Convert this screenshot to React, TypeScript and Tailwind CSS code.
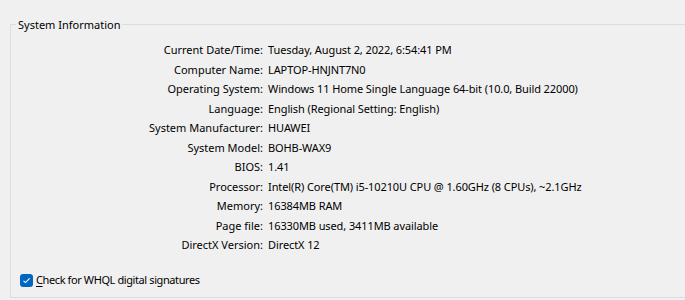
import React from "react";

const rows: [string, string][] = [
  ["Current Date/Time:", "Tuesday, August 2, 2022, 6:54:41 PM"],
  ["Computer Name:", "LAPTOP-HNJNT7N0"],
  ["Operating System:", "Windows 11 Home Single Language 64-bit (10.0, Build 22000)"],
  ["Language:", "English (Regional Setting: English)"],
  ["System Manufacturer:", "HUAWEI"],
  ["System Model:", "BOHB-WAX9"],
  ["BIOS:", "1.41"],
  ["Processor:", "Intel(R) Core(TM) i5-10210U CPU @ 1.60GHz (8 CPUs), ~2.1GHz"],
  ["Memory:", "16384MB RAM"],
  ["Page file:", "16330MB used, 3411MB available"],
  ["DirectX Version:", "DirectX 12"],
];

export default function App() {
  return (
    <div
      className="w-[685px] h-[300px] bg-[#f0f0f0] overflow-hidden pl-[10px] pt-[24px] text-[11px] text-[#000]"
      style={{ fontFamily: '"Segoe UI", "Noto Sans", "Open Sans", sans-serif' }}
    >
      <div className="relative w-[700px] h-[274px] border border-[#dcdcdc] flex flex-col">
        <div className="absolute left-[5px] top-[-8px] px-[2px] bg-[#f0f0f0] leading-[16px]">
          System Information
        </div>
        <div className="mt-[15px] grid grid-cols-[252px_1fr] gap-x-[5px]">
          {rows.map(([k, v]) => (
            <React.Fragment key={k}>
              <div className="text-right leading-[19.5px] whitespace-nowrap">{k}</div>
              <div className="leading-[19.5px] whitespace-nowrap tracking-[-0.1px]">{v}</div>
            </React.Fragment>
          ))}
        </div>
        <div className="mt-auto mb-[9px] ml-[9px] flex items-center gap-[3px]">
          <div className="w-[13px] h-[13px] rounded-[3px] bg-[#0067c0] flex items-center justify-center">
            <svg width="9" height="9" viewBox="0 0 9 9">
              <path d="M1.5 4.8 L3.5 6.6 L7.6 2.3" fill="none" stroke="#fff" strokeWidth="1.1" />
            </svg>
          </div>
          <span className="leading-[16px] tracking-[-0.4px]">
            <span className="underline underline-offset-2">C</span>heck for WHQL digital signatures
          </span>
        </div>
      </div>
    </div>
  );
}
